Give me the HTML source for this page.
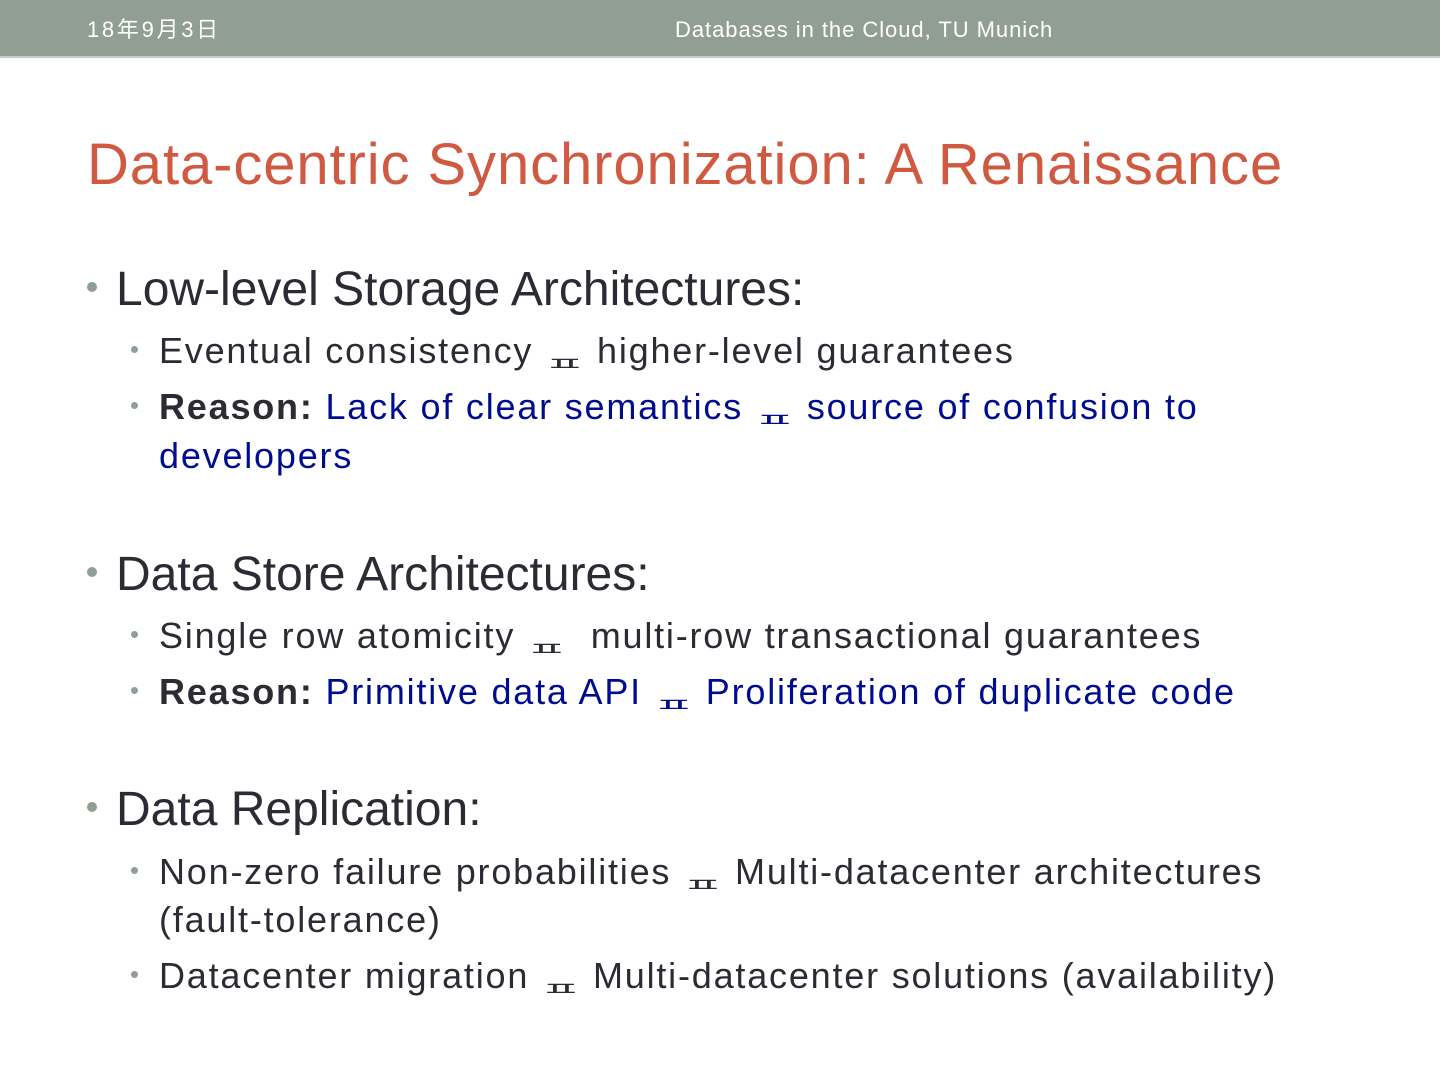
<!DOCTYPE html>
<html><head><meta charset="utf-8"><style>
*{margin:0;padding:0}
body{width:1440px;height:1080px;background:#fff;position:relative;overflow:hidden;font-family:"Liberation Sans","Noto Sans CJK SC",sans-serif;}
.hdr{position:absolute;left:0;top:0;width:1440px;height:56px;background:#919e94;border-bottom:2px solid #c5cdc7}
.ht{position:absolute;top:19px;font-size:22px;line-height:1;color:#fff;white-space:nowrap;letter-spacing:0.95px}
.t{position:absolute;left:87px;top:136px;font-size:58px;line-height:1;color:#d05a41;letter-spacing:0.9px;white-space:nowrap}
.l{position:absolute;white-space:nowrap;line-height:1;color:#2b2b33}
.l1{left:116px;font-size:48px;letter-spacing:0px}
.l2{left:159px;font-size:36px;letter-spacing:1.8px}
.b1,.b2{position:absolute;background:#919e94;border-radius:50%}
.b1{width:10px;height:10px;left:87px}
.b2{width:7px;height:7px;left:131px}
.blue{color:#000c8f}
b{color:#2b2b33}
.g{display:inline-block;width:27px;height:10px;position:relative;vertical-align:baseline;margin:0 17px 0 8px}
.g span{position:absolute;left:-9px;bottom:-9px;font-family:"Noto Sans CJK KR",sans-serif;font-size:36px;line-height:1;transform:scale(1.25,0.52);transform-origin:left bottom;display:block;letter-spacing:0}
</style></head><body>
<div class="hdr"></div>
<div class="ht" style="left:87px;letter-spacing:2.7px">18年9月3日</div>
<div class="ht" style="left:675px">Databases in the Cloud, TU Munich</div>
<div class="t">Data-centric Synchronization: A Renaissance</div>

<div class="b1" style="top:282px"></div>
<div class="l l1" style="top:266px">Low-level Storage Architectures:</div>
<div class="b2" style="top:346px"></div>
<div class="l l2" style="top:333px">Eventual consistency <span class="g"><span>ㅍ</span></span>higher-level guarantees</div>
<div class="b2" style="top:402px"></div>
<div class="l l2" style="top:389px"><b>Reason:</b> <span class="blue">Lack of clear semantics <span class="g"><span>ㅍ</span></span>source of confusion to</span></div>
<div class="l l2 blue" style="top:438px">developers</div>

<div class="b1" style="top:567px"></div>
<div class="l l1" style="top:551px">Data Store Architectures:</div>
<div class="b2" style="top:631px"></div>
<div class="l l2" style="top:618px">Single row atomicity <span class="g"><span>ㅍ</span></span>&nbsp;multi-row transactional guarantees</div>
<div class="b2" style="top:687px"></div>
<div class="l l2" style="top:674px"><b>Reason:</b> <span class="blue">Primitive data API <span class="g"><span>ㅍ</span></span>Proliferation of duplicate code</span></div>

<div class="b1" style="top:802px"></div>
<div class="l l1" style="top:786px">Data Replication:</div>
<div class="b2" style="top:867px"></div>
<div class="l l2" style="top:854px">Non-zero failure probabilities <span class="g"><span>ㅍ</span></span>Multi-datacenter architectures</div>
<div class="l l2" style="top:902px">(fault-tolerance)</div>
<div class="b2" style="top:971px"></div>
<div class="l l2" style="top:958px">Datacenter migration <span class="g"><span>ㅍ</span></span>Multi-datacenter solutions (availability)</div>
</body></html>
